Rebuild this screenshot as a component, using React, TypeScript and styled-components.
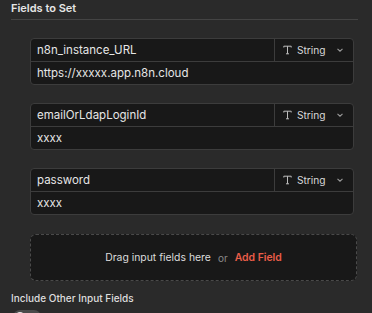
import styled, {createGlobalStyle} from 'styled-components';

const GlobalStyle = createGlobalStyle`
  html, body {
    margin: 0;
    padding: 0;
    background: #2a2a2a;
  }
  body {
    font-family: Inter, 'Liberation Sans', sans-serif;
    color: #e2e2e2;
    -webkit-font-smoothing: antialiased;
  }
`;

interface FieldItem {
  name: string;
  value: string;
  type: string;
}

const fields: FieldItem[] = [
  {name: 'n8n_instance_URL', value: 'https://xxxxx.app.n8n.cloud', type: 'String'},
  {name: 'emailOrLdapLoginId', value: 'xxxx', type: 'String'},
  {name: 'password', value: 'xxxx', type: 'String'},
];

const Panel = styled.div`
  width: 372px;
  height: 313px;
  overflow: hidden;
  padding: 2px 14px 0 11px;
  box-sizing: border-box;
`;

const SectionTitle = styled.div`
  font-size: 11px;
  font-weight: 600;
  line-height: 12px;
  color: #e6e6e6;
  padding-bottom: 5px;
  border-bottom: 1px solid #444;
`;

const FieldList = styled.div`
  display: flex;
  flex-direction: column;
  gap: 18px;
  padding: 18px 4px 0 19px;
`;

const FieldCard = styled.div`
  display: flex;
  flex-direction: column;
  background: #181818;
  border: 1px solid #3c3c3c;
  border-radius: 4px;
  overflow: hidden;
`;

const CardRow = styled.div`
  display: flex;
  height: 22px;

  & + & {
    border-top: 1px solid #3c3c3c;
  }
`;

const NameCell = styled.div`
  flex: 1;
  display: flex;
  align-items: center;
  padding: 0 6px;
  font-size: 11.5px;
  color: #e6e6e6;
`;

const TypeCell = styled.div`
  width: 79px;
  display: flex;
  align-items: center;
  gap: 5px;
  padding: 0 9px 0 8px;
  box-sizing: border-box;
  border-left: 1px solid #3c3c3c;
  font-size: 10.2px;
  color: #d8d8d8;
`;

const TypeLabel = styled.span`
  flex: 1;
`;

const ValueCell = styled.div`
  flex: 1;
  display: flex;
  align-items: center;
  padding: 0 6px;
  font-size: 11.5px;
  color: #e6e6e6;
`;

const DropZone = styled.div`
  margin: 19px 1px 0 19px;
  height: 47px;
  box-sizing: border-box;
  border: 1px dashed #4a4a4a;
  border-radius: 6px;
  background: #181818;
  display: flex;
  align-items: center;
  justify-content: center;
  gap: 7px;
  font-size: 10.4px;
  color: #dcdcdc;
`;

const OrText = styled.span`
  color: #8a8a8a;
  font-size: 10px;
`;

const AddLink = styled.span`
  color: #ea5d48;
  font-weight: 600;
`;

const SubTitle = styled.div`
  margin-top: 11px;
  font-size: 10px;
  line-height: 13px;
  font-weight: 500;
  color: #dedede;
`;

const Toggle = styled.div`
  margin: 5px 0 0 2px;
  width: 28px;
  height: 14px;
  border-radius: 7px;
  background: #4a4a4a;
  position: relative;

  &::after {
    content: '';
    position: absolute;
    left: 2px;
    top: 2px;
    width: 10px;
    height: 10px;
    border-radius: 50%;
    background: #e8e8e8;
  }
`;

const TypeIcon = () => (
  <svg width="9" height="10" viewBox="0 0 9 10" fill="none" stroke="#bdbdbd" strokeWidth="1">
    <path d="M0.8 2.5V1.2h7.4v1.3M4.5 1.2v7.6M3 8.8h3" />
  </svg>
);

const Chevron = () => (
  <svg width="8" height="6" viewBox="0 0 8 6" fill="none" stroke="#9a9a9a" strokeWidth="1.1">
    <path d="M1.5 1.8L4 4.2l2.5-2.4" />
  </svg>
);

const App = () => {
  return (
    <>
      <GlobalStyle />
      <Panel>
        <SectionTitle>Fields to Set</SectionTitle>
        <FieldList>
          {fields.map((f) => (
            <FieldCard key={f.name}>
              <CardRow>
                <NameCell>{f.name}</NameCell>
                <TypeCell>
                  <TypeIcon />
                  <TypeLabel>{f.type}</TypeLabel>
                  <Chevron />
                </TypeCell>
              </CardRow>
              <CardRow>
                <ValueCell>{f.value}</ValueCell>
              </CardRow>
            </FieldCard>
          ))}
        </FieldList>
        <DropZone>
          <span>Drag input fields here</span>
          <OrText>or</OrText>
          <AddLink>Add Field</AddLink>
        </DropZone>
        <SubTitle>Include Other Input Fields</SubTitle>
        <Toggle />
      </Panel>
    </>
  );
};

export default App;
